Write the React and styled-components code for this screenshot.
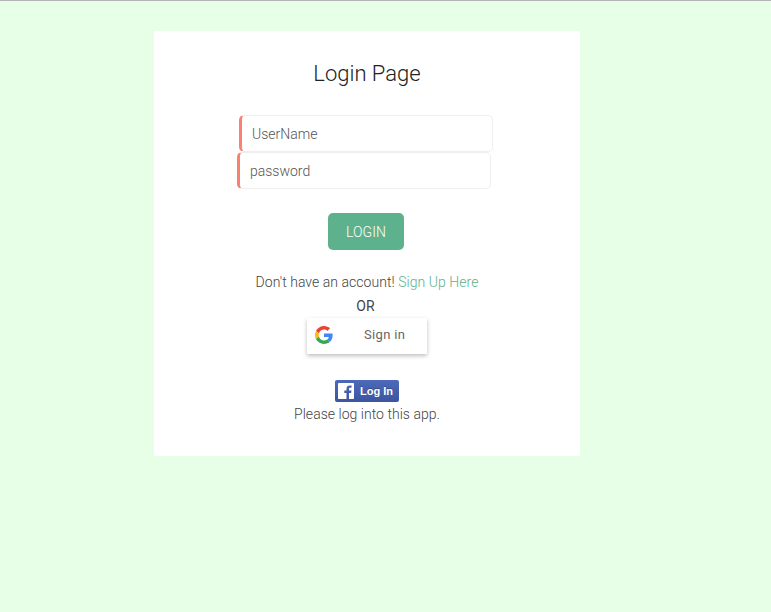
import React from "react";
import styled, { createGlobalStyle } from "styled-components";

const GlobalStyle = createGlobalStyle`
  * { box-sizing: border-box; }
  body {
    margin: 0;
    background: #e6ffe6;
    font-family: Roboto, "Liberation Sans", sans-serif;
    font-weight: 300;
    font-size: 14px;
    color: #444;
  }
`;

const Page = styled.main`
  min-height: 612px;
  border-top: 1px solid #b5b5b5;
  padding: 30px 0 0 154px;
`;

const Card = styled.form`
  width: 426px;
  height: 425px;
  background: #fff;
  display: flex;
  flex-direction: column;
  align-items: center;
`;

const Title = styled.h1`
  margin: 27px 0 0;
  font-size: 22px;
  line-height: 32px;
  font-weight: 300;
  color: #222;
`;

const Fields = styled.div`
  margin: 25px 0 0 83px;
  align-self: flex-start;
  display: flex;
  flex-direction: column;
`;

const Field = styled.input`
  width: 254px;
  height: 37px;
  margin-left: ${(p) => p.$indent || 0}px;
  padding: 0 10px;
  border: 1px solid #eee;
  border-left: 3px solid #fa8072;
  border-radius: 5px;
  outline: none;
  background: #fff;
  font: inherit;
  &::placeholder { color: #555; opacity: 1; }
`;

const LoginButton = styled.button`
  margin: 24px 2px 0 0;
  width: 76px;
  height: 37px;
  padding: 0;
  border: 0;
  border-radius: 5px;
  background: #5db28d;
  color: #fff;
  font: 300 14px Roboto, sans-serif;
  letter-spacing: 0.1px;
`;

const Line = styled.p`
  margin: ${(p) => p.$top || 0}px 0 0;
  line-height: 24px;
  white-space: nowrap;
  letter-spacing: ${(p) => p.$spacing || 0}px;
`;

const SignUpLink = styled.a`
  color: #5db28d;
  text-decoration: none;
`;

const Divider = styled(Line)`
  margin-right: 3px;
  font-weight: 400;
  color: #444;
`;

const GoogleButton = styled.button`
  width: 120px;
  height: 36px;
  flex: none;
  padding: 0 0 0 8px;
  border: 0;
  border-radius: 1px;
  display: flex;
  align-items: center;
  background: #fff;
  box-shadow: 0 2px 4px 0 rgba(0, 0, 0, 0.25);
  color: #666;
  font: 400 13px/34px Roboto, sans-serif;
  letter-spacing: 0.35px;
`;

const GoogleMark = styled.svg`
  flex: none;
  margin-bottom: 2px;
`;

const GoogleLabel = styled.span`
  margin: 0 0 2px 31px;
`;

const FacebookButton = styled.button`
  margin-top: 26px;
  width: 64px;
  height: 22px;
  padding: 0 0 0 3px;
  border: 0;
  border-radius: 2px;
  display: flex;
  align-items: center;
  gap: 6px;
  background: linear-gradient(#4c69ba, #3b55a0);
  color: #fff;
  font: bold 11px "Liberation Sans", Arial, sans-serif;
  white-space: nowrap;
  text-shadow: 0 -1px 0 #354c8c;
`;

const GoogleLogo = () => (
  <GoogleMark width="18" height="18" viewBox="0 0 48 48">
    <path fill="#EA4335" d="M24 9.5c3.54 0 6.71 1.22 9.21 3.6l6.85-6.85C35.9 2.38 30.47 0 24 0 14.62 0 6.51 5.38 2.56 13.22l7.98 6.19C12.43 13.72 17.74 9.5 24 9.5z" />
    <path fill="#4285F4" d="M46.98 24.55c0-1.57-.15-3.09-.38-4.55H24v9.02h12.94c-.58 2.96-2.26 5.48-4.78 7.18l7.73 6c4.51-4.18 7.09-10.36 7.09-17.65z" />
    <path fill="#FBBC05" d="M10.53 28.59c-.48-1.45-.76-2.99-.76-4.59s.27-3.14.76-4.59l-7.98-6.19C.92 16.46 0 20.12 0 24c0 3.88.92 7.54 2.56 10.78l7.97-6.19z" />
    <path fill="#34A853" d="M24 48c6.48 0 11.93-2.13 15.89-5.81l-7.73-6c-2.15 1.45-4.92 2.3-8.16 2.3-6.26 0-11.57-4.22-13.47-9.91l-7.98 6.19C6.51 42.62 14.62 48 24 48z" />
  </GoogleMark>
);

const FacebookLogo = () => (
  <svg width="16" height="16" viewBox="0 0 16 16">
    <path fill="#fff" d="M.8 0h14.4a.8.8 0 0 1 .8.8v14.4a.8.8 0 0 1-.8.8H11V9.9h2.1l.35-2.4H11V6c0-.8.3-1.2 1.25-1.2h1.3V2.6c-.4-.1-1-.15-1.8-.15-2 0-3.25 1.15-3.25 3.3V7.5H6.3v2.4h2.2V16H.8a.8.8 0 0 1-.8-.8V.8A.8.8 0 0 1 .8 0z" />
  </svg>
);

export default function App() {
  return (
    <>
      <GlobalStyle />
      <Page>
        <Card>
          <Title>Login Page</Title>
          <Fields>
            <Field $indent={2} placeholder="UserName" />
            <Field type="password" placeholder="password" />
          </Fields>
          <LoginButton type="button">LOGIN</LoginButton>
          <Line $top={20} $spacing={0.045}>
            Don't have an account! <SignUpLink>Sign Up Here</SignUpLink>
          </Line>
          <Divider>OR</Divider>
          <GoogleButton type="button">
            <GoogleLogo />
            <GoogleLabel>Sign in</GoogleLabel>
          </GoogleButton>
          <FacebookButton type="button">
            <FacebookLogo />
            Log In
          </FacebookButton>
          <Line $spacing={0.03}>Please log into this app.</Line>
        </Card>
      </Page>
    </>
  );
}
